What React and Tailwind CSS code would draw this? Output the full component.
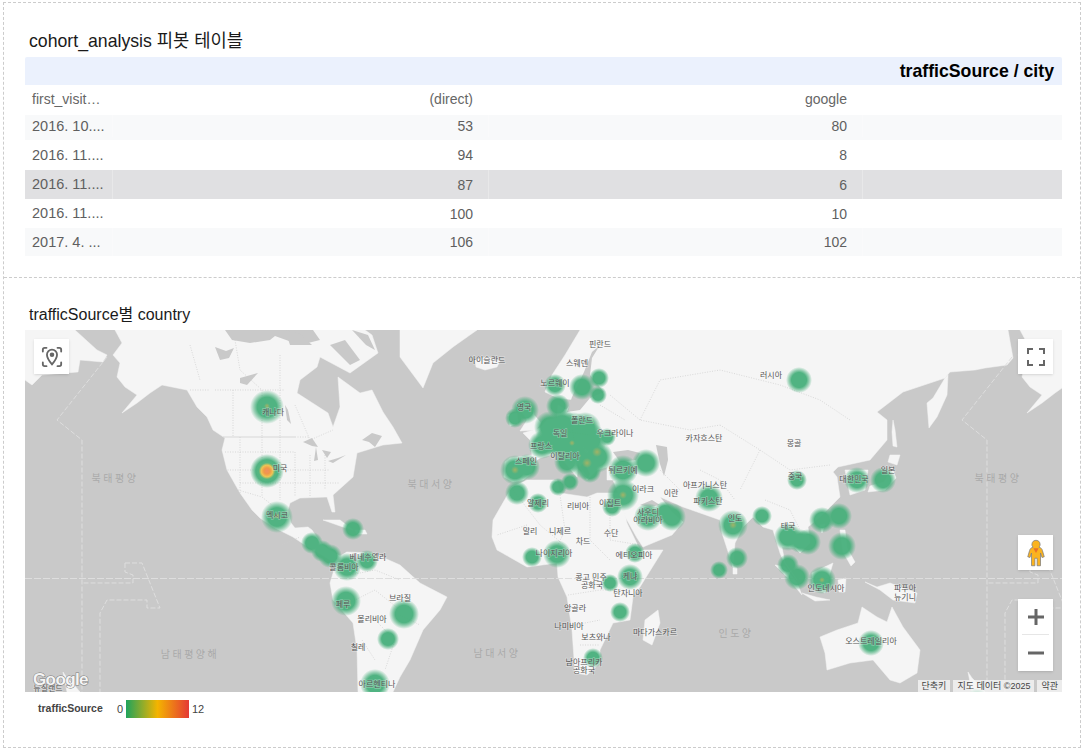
import React from 'react';

const LAND = '#f5f5f5';
const WATER = '#c9c9c9';

// every shape below is in page coordinates, the svg viewBox starts at the map's corner
const alaskaEdge = '115,330 122,343 113,355 120,363 117,377 125,387 137,395 122,413 137,403 150,393 162,385';

const land = [
  // north america
  `${alaskaEdge} 187,390 197,407 207,417 213,430 225,438 222,450 227,470 240,493 252,510 260,518 275,528 293,537 305,545 317,552 330,560 337,562 347,552 340,556 333,552 322,545 312,530 308,527 295,528 291,523 288,510 290,503 300,498 327,497 332,512 335,512 333,495 353,477 357,453 383,445 402,443 393,427 383,412 372,390 360,393 338,377 340,407 333,427 328,413 297,393 300,380 317,367 320,357 350,373 378,353 372,335 365,330`,
  // south america
  '337,560 347,552 373,553 400,565 420,583 447,597 440,610 423,630 410,660 400,677 393,692 358,692 357,650 353,623 333,600 330,583',
  // greenland and iceland
  '400,330 400,357 423,388 433,363 453,347 477,330',
  '475,360 487,357 500,361 497,367 485,370 476,367',
  // cuba, hispaniola
  '323,520 340,520 353,530 343,527',
  '355,530 365,530 367,534 357,534',
  // eurasia
  '580,330 1008,330 1013,358 1007,365 985,368 975,370 950,372 945,378 903,392 877,412 887,420 887,440 870,460 838,467 833,472 837,477 840,497 820,517 808,527 810,543 800,553 795,548 782,547 785,563 797,580 783,560 780,553 773,530 763,527 753,517 743,527 735,543 733,567 722,533 720,520 683,507 660,497 672,512 683,522 672,535 643,547 637,538 623,513 620,497 613,480 607,480 607,467 597,470 587,480 578,463 577,477 567,465 557,453 540,458 533,463 532,473 523,480 513,482 504,477 505,462 510,458 532,455 530,440 523,433 540,428 547,420 557,418 558,405 566,410 575,400 558,398 545,392 552,375 565,355',
  // kamchatka, sakhalin
  '948,375 947,395 937,417 929,428 927,403 933,398 945,378',
  '893,420 895,430 897,447 893,446 892,432',
  // africa
  '512,487 527,480 557,480 560,493 587,497 597,493 620,493 627,523 640,550 663,550 640,587 633,597 630,620 613,623 600,650 600,663 587,675 575,673 572,630 567,597 558,577 557,563 527,567 497,550 492,537 493,520',
  '658,610 660,623 652,645 643,640 645,620',
  // uk, ireland
  '522,402 532,404 534,415 541,423 536,430 520,431 527,420 522,412',
  '508,415 517,413 518,423 510,426',
  // japan, korea, taiwan
  '890,455 900,455 897,465 888,462',
  '892,468 896,478 885,490 868,492 870,486 884,482',
  '845,470 868,470 865,490 850,495',
  '820,525 825,524 822,533',
  // philippines, indonesia
  '840,530 845,530 847,548 855,562 851,566 843,552',
  '775,565 785,567 797,583 802,595 787,577',
  '812,573 833,563 830,573 825,593 813,587',
  '802,593 816,597 830,600 815,601',
  '838,580 846,578 845,592 839,592',
  '865,582 877,587 890,583 917,593 915,603 893,600 880,590',
  // sri lanka
  '733,566 737,568 737,574 733,574',
  // australia
  '820,637 837,630 858,623 862,607 877,617 887,622 892,607 903,627 920,650 917,673 900,683 890,680 873,660 850,663 827,670 825,653',
  // new zealand, both sides of the wrap
  '968,672 972,678 980,686 985,692 972,692',
  '63,672 67,678 75,686 80,692 67,692',
  // far east russia on the left edge
  '25,330 75,330 97,350 107,355 103,362 80,360 78,372 42,375 32,385 25,380',
  // alaska again on the right edge
  '1020,330 1027,343 1018,355 1025,363 1022,377 1030,387 1042,395 1027,413 1042,403 1055,393 1062,388 1062,330',
];

const water = [
  // arctic channels
  '225,330 232,340 250,343 270,340 275,336 300,345 320,340 313,330',
  '215,347 226,351 234,348 229,358 220,360',
  '240,378 258,373 247,385 240,383',
  '285,405 288,410 291,424 287,420',
  '330,345 350,365 360,360 345,340',
  '352,330 366,345 375,350 368,335',
  '285,330 300,334 312,345 290,345',
  // great lakes, st lawrence
  '303,442 312,438 318,447 312,446',
  '316,447 318,460 314,461',
  '322,450 331,452 327,458',
  '328,461 338,458 346,455 333,463',
  '362,440 372,433 382,436 375,447 369,442',
  // mediterranean parts that the land outline covers, black sea, caspian
  '613,452 628,450 640,453 636,460 620,462',
  '656,445 667,447 668,460 664,476 660,464',
  '600,345 592,358 590,375 604,392 590,398 580,410 567,412 572,397 584,372 592,352',
  '640,505 652,500 660,505 650,507',
  '584,462 590,474 588,478 580,467',
];

const borders = [
  'M190,390 L210,390 M215,390 L285,390 M233,390 L233,437 M262,390 L262,437 M280,390 L280,437 M295,437 L310,437',
  'M190,345 L200,380 M235,340 L240,370 L262,390 M280,355 L280,390 M295,405 L310,440 L333,430',
  'M225,452 L295,452 M240,437 L240,493 M262,437 L262,497 M280,437 L280,500 M295,452 L295,497 M225,470 L330,470 M240,483 L340,483 M310,455 L310,497 M325,455 L325,490',
  'M238,490 L262,497 L272,505 M282,545 L300,537',
  'M350,575 L375,570 L400,580 M345,605 L375,590 L400,610 M375,620 L395,640 L385,670 M362,640 L375,660 M400,615 L420,625',
  'M513,490 L540,525 L570,550 M560,495 L565,530 L558,545 M590,497 L590,540 L610,560 M527,525 L497,535 M610,500 L610,540 L640,545 M568,595 L600,590 L625,590 M575,625 L600,620 M580,645 L600,645',
  'M610,395 L640,420 L690,430 L720,425 M640,420 L660,380 L720,370 L780,385 L820,400 L850,420 M720,425 L760,450 L790,470 L830,465 M700,470 L720,480 L735,500 M760,450 L740,490 M660,470 L680,490 M765,500 L790,510 L800,530',
  'M555,430 L590,435 M570,415 L575,445 M600,405 L625,420',
];

// x, y, radius with the soft edge included
const blobs = [
  [267, 407, 17], [277, 517, 16], [353, 529, 11], [312, 543, 11], [322, 551, 11], [330, 556, 12], [347, 567, 14],
  [367, 561, 11], [346, 601, 15], [404, 614, 15], [388, 639, 11], [375, 684, 15], [799, 380, 13],
  [582, 387, 13], [599, 378, 10], [598, 395, 9], [555, 385, 11], [558, 406, 12], [525, 410, 14], [515, 418, 10],
  [550, 427, 16], [562, 425, 16], [573, 430, 18], [585, 428, 16], [550, 440, 15], [542, 445, 14], [560, 442, 16],
  [573, 443, 18], [590, 440, 17], [597, 457, 16], [587, 463, 17], [575, 452, 15], [567, 462, 13], [590, 472, 11],
  [607, 437, 9], [515, 470, 15], [527, 467, 13], [517, 493, 12], [558, 487, 9], [570, 482, 9], [538, 503, 10],
  [623, 470, 15], [646, 463, 14], [612, 507, 10], [623, 495, 16], [648, 517, 14], [672, 517, 14], [665, 512, 11],
  [709, 498, 14], [733, 525, 15], [737, 558, 11], [719, 570, 9], [557, 554, 14], [532, 557, 10], [635, 553, 10],
  [630, 577, 13], [610, 583, 9], [620, 612, 10], [593, 658, 10], [762, 516, 10], [788, 537, 14], [800, 541, 12],
  [808, 542, 13], [822, 520, 13], [839, 516, 13], [842, 546, 14], [788, 565, 11], [797, 577, 13], [822, 580, 14],
  [857, 480, 13], [883, 480, 13], [797, 480, 10], [871, 643, 13], [977, 698, 10],
];

const tints = [
  [267, 406, 3], [277, 516, 3], [515, 470, 4], [623, 495, 4], [572, 443, 3], [587, 463, 5], [597, 452, 5], [733, 525, 4], [822, 580, 3],
];

const labels = [
  ['핀란드', 600, 345], ['아이슬란드', 487, 361], ['스웨덴', 577, 364], ['노르웨이', 555, 384], ['러시아', 771, 376],
  ['영국', 524, 408], ['폴란드', 582, 421], ['우크라이나', 615, 434], ['독일', 560, 434], ['카자흐스탄', 704, 439],
  ['몽골', 794, 444], ['프랑스', 541, 447], ['스페인', 526, 462], ['이탈리아', 565, 457], ['튀르키예', 623, 471],
  ['이라크', 643, 490], ['이란', 671, 494], ['아프가니스탄', 705, 486], ['파키스탄', 708, 502], ['알제리', 538, 504],
  ['리비아', 578, 507], ['이집트', 610, 504], ['사우디', 648, 513], ['아라비아', 648, 521], ['중국', 795, 477],
  ['대한민국', 854, 480], ['일본', 888, 471], ['태국', 788, 527], ['인도', 735, 519], ['말리', 530, 532],
  ['니제르', 560, 532], ['차드', 583, 542], ['수단', 611, 534], ['에티오피아', 634, 556], ['나이지리아', 554, 554],
  ['콩고 민주', 591, 578], ['공화국', 592, 586], ['케냐', 630, 577], ['탄자니아', 628, 594], ['앙골라', 575, 609],
  ['나미비아', 569, 627], ['보츠와나', 596, 638], ['마다가스카르', 655, 633], ['남아프리카', 584, 663], ['공화국', 584, 671],
  ['인도네시아', 826, 589], ['파푸아', 905, 589], ['뉴기니', 905, 598], ['오스트레일리아', 871, 642], ['캐나다', 273, 413],
  ['미국', 280, 469], ['멕시코', 277, 516], ['베네수엘라', 368, 558], ['콜롬비아', 344, 568], ['페루', 343, 605],
  ['브라질', 400, 599], ['볼리비아', 372, 620], ['칠레', 358, 648], ['아르헨티나', 377, 685], ['뉴질랜드', 48, 689],
];

const oceans = [
  ['북태평양', 115, 479], ['북태평양', 998, 479], ['북대서양', 431, 485], ['남태평양해', 190, 655], ['남대서양', 497, 654], ['인도양', 736, 634],
];

const rows = [
  ['2016. 10....', '53', '80', 'bg-[#f8f9fa] h-[25px] pb-[3px]'],
  ['2016. 11....', '94', '8', 'bg-white h-[30px]'],
  ['2016. 11....', '87', '6', 'bg-[#e0e0e2] h-[29px]'],
  ['2016. 11....', '100', '10', 'bg-white h-[29px]'],
  ['2017. 4. ...', '106', '102', 'bg-[#f8f9fa] h-[28px]'],
];

const DateLine = () => (
  <g fill="none" stroke="#dedede" strokeWidth="1" strokeDasharray="5 2">
    <path d="M107,357 L57,420 L82,440 L82,692" />
    <path d="M125,563 L142,563 L160,608 L147,608 L147,600 L107,600 L100,613 L100,692" />
    <path d="M125,563 L125,572 L133,575 L133,583 L82,583" />
  </g>
);

const WorldMap = () => (
  <svg viewBox="25 330 1037 362" className="absolute inset-0 h-full w-full">
    <defs>
      <radialGradient id="heat">
        <stop offset="0%" stopColor="#48b07c" />
        <stop offset="58%" stopColor="#48b07c" />
        <stop offset="78%" stopColor="#48b07c" stopOpacity="0.55" />
        <stop offset="100%" stopColor="#48b07c" stopOpacity="0" />
      </radialGradient>
      <radialGradient id="hot">
        <stop offset="0%" stopColor="#f08a5a" />
        <stop offset="18%" stopColor="#f0943f" />
        <stop offset="34%" stopColor="#eec24c" />
        <stop offset="48%" stopColor="#4eb37a" />
        <stop offset="66%" stopColor="#48b07c" />
        <stop offset="84%" stopColor="#48b07c" stopOpacity="0.5" />
        <stop offset="100%" stopColor="#48b07c" stopOpacity="0" />
      </radialGradient>
      <radialGradient id="tint">
        <stop offset="0%" stopColor="#b7b35f" stopOpacity="0.8" />
        <stop offset="100%" stopColor="#b7b35f" stopOpacity="0" />
      </radialGradient>
    </defs>
    <rect x="25" y="330" width="1037" height="362" fill={WATER} />
    {land.map((points, i) => (
      <polygon key={i} points={points} fill={LAND} strokeLinejoin="round" stroke={LAND} strokeWidth="0.5" />
    ))}
    {water.map((points, i) => (
      <polygon key={i} points={points} fill={WATER} />
    ))}
    {borders.map((d, i) => (
      <path key={i} d={d} fill="none" stroke="#cbcbcb" strokeWidth="0.7" strokeDasharray="1 1.5" />
    ))}
    <path d="M223,437 L295,437" stroke="#cfcfcf" strokeWidth="0.8" />
    <path d="M25,578.5 L1062,578.5" stroke="#dedede" strokeWidth="1" strokeDasharray="7 2" />
    <DateLine />
    <g transform="translate(905 0)">
      <DateLine />
    </g>
    <g opacity="0.95">
      {blobs.map(([x, y, r], i) => (
        <circle key={i} cx={x} cy={y} r={r} fill="url(#heat)" />
      ))}
      <circle cx="267" cy="471" r="17" fill="url(#hot)" />
    </g>
    {tints.map(([x, y, r], i) => (
      <circle key={i} cx={x} cy={y} r={r} fill="url(#tint)" />
    ))}
    {oceans.map(([name, x, y], i) => (
      <text key={i} x={x} y={y} textAnchor="middle" dominantBaseline="middle" fontSize="10" letterSpacing="2.5" fill="#a9a9a9">
        {name}
      </text>
    ))}
    {labels.map(([name, x, y], i) => (
      <text
        key={i}
        x={x}
        y={y}
        textAnchor="middle"
        dominantBaseline="middle"
        fontSize="8"
        fill="#555"
        stroke="#fff"
        strokeOpacity="0.3"
        strokeWidth="1.5"
        paintOrder="stroke"
      >
        {name}
      </text>
    ))}
    <text x="33" y="685" fontSize="17" fontWeight="700" fill="#f4f4f4" stroke="#7d7d7d" strokeWidth="1" paintOrder="stroke" letterSpacing="-0.6">
      Google
    </text>
  </svg>
);

const Pegman = () => (
  <svg viewBox="0 0 24 36" className="h-[28px] w-[18px]">
    <path
      d="M12 1a5.5 5.5 0 0 1 4 9.3c2.6.7 4 2 4.600 4.500L23 23l-3 1-2-6v17h-4.500V25h-3v10H6V18l-2 6-3-1 2.400-8.200C4 12.300 5.400 11 8 10.300A5.500 5.500 0 0 1 12 1z"
      fill="#fbb31f"
      stroke="#7d7d7d"
      strokeWidth="1"
    />
    <path d="M8.500 11.500 12 18l3.500-6.500z" fill="#e8732a" />
  </svg>
);

const App = () => {
  return (
    <div className="h-[751px] w-[1082px] overflow-hidden bg-white pl-[3px] pt-[2px] font-['Liberation_Sans','Noto_Sans_CJK_KR',sans-serif]">
      <div className="h-[746px] w-[1078px] border-x border-y border-dashed border-[#cccccc]">
        <section className="h-[275px] border-b border-dashed border-[#cccccc] pl-[21px] pr-[18px] pt-[26px]">
          <h2 className="pl-[4px] text-[17.700px] leading-[24px] text-[#1a1a1a]">cohort_analysis 피봇 테이블</h2>
          <div className="mt-[4px] flex h-[28px] items-center justify-end rounded-t-[2px] bg-[#ebf1fd] pr-[8px] text-[17.700px] font-bold text-black">
            trafficSource / city
          </div>
          <div className="grid h-[30px] grid-cols-[88px_376px_374px_199px] items-center pb-[2px] text-sm text-[#666666]">
            <div className="pl-[7px]">first_visit…</div>
            <div className="pr-[16px] text-right">(direct)</div>
            <div className="pr-[16px] text-right">google</div>
            <div />
          </div>
          {rows.map(([date, direct, google, rowStyle], i) => (
            <div key={i} className={`grid grid-cols-[88px_376px_374px_199px] text-sm text-[#5f5f5f] ${rowStyle}`}>
              <div className="flex items-center border-r border-white/25 pl-[7px] text-[14.500px]">{date}</div>
              <div className="flex items-center justify-end border-r border-white/25 pr-[15px]">{direct}</div>
              <div className="flex items-center justify-end border-r border-white/25 pr-[15px]">{google}</div>
              <div />
            </div>
          ))}
        </section>
        <section className="pl-[21px] pr-[18px] pt-[25px]">
          <h2 className="pl-[4px] text-base leading-[24px] text-[#1a1a1a]">trafficSource별 country</h2>
          <div className="relative mt-[3px] h-[362px] w-[1037px] overflow-hidden">
            <WorldMap />
            <button className="absolute left-[9px] top-[9px] flex h-[35px] w-[35px] items-center justify-center bg-white shadow-sm">
              <svg viewBox="0 0 24 24" className="h-[22px] w-[22px]" fill="none" stroke="#666" strokeWidth="2">
                <path d="M2 6V4a2 2 0 0 1 2-2h2M18 2h2a2 2 0 0 1 2 2v2M2 18v2a2 2 0 0 0 2 2h2M18 22h2a2 2 0 0 0 2-2v-2" strokeLinecap="round" />
                <path d="M12 4a5.500 5.500 0 0 0-5.500 5.500C6.500 13.500 12 20 12 20s5.500-6.500 5.500-10.500A5.500 5.500 0 0 0 12 4z" />
                <circle cx="12" cy="9.500" r="1.500" fill="#666" />
              </svg>
            </button>
            <button className="absolute right-[9px] top-[9px] flex h-[35px] w-[35px] items-center justify-center bg-white shadow-sm">
              <svg viewBox="0 0 18 18" className="h-[18px] w-[18px]" fill="none" stroke="#666" strokeWidth="2">
                <path d="M1 6V1h5M12 1h5v5M1 12v5h5M12 17h5v-5" />
              </svg>
            </button>
            <button className="absolute right-[9px] top-[205px] flex h-[35px] w-[35px] items-center justify-center bg-white shadow-sm">
              <Pegman />
            </button>
            <div className="absolute right-[9px] top-[269px] flex h-[72px] w-[35px] flex-col items-center bg-white shadow-sm">
              <svg viewBox="0 0 18 18" className="mt-[9px] h-[18px] w-[18px]" fill="#666">
                <path d="M7.500 1h3v6.500H17v3h-6.500V17h-3v-6.500H1v-3h6.500z" />
              </svg>
              <div className="mt-[8px] h-px w-[27px] bg-[#e6e6e6]" />
              <svg viewBox="0 0 18 18" className="mt-[9px] h-[18px] w-[18px]" fill="#666">
                <path d="M1 7.500h16v3H1z" />
              </svg>
            </div>
            <div className="absolute bottom-0 right-0 flex h-[12px] gap-[3px] text-[9px] leading-[12px] text-[#444444]">
              <span className="bg-[#f5f5f5]/80 px-[4px]">단축키</span>
              <span className="bg-[#f5f5f5]/80 px-[4px]">지도 데이터 ©2025</span>
              <span className="bg-[#f5f5f5]/80 px-[4px]">약관</span>
            </div>
          </div>
          <div className="mt-[8px] flex h-[18px] items-center pl-[13px] text-[11px] text-[#444444]">
            <span className="w-[79px] text-[10.500px] font-bold">trafficSource</span>
            <span className="w-[9px]">0</span>
            <span className="h-[18px] w-[63px] bg-[linear-gradient(to_right,#1fa35c,#f4b400_50%,#e53935)]" />
            <span className="pl-[3px]">12</span>
          </div>
        </section>
      </div>
    </div>
  );
};

export default App;
